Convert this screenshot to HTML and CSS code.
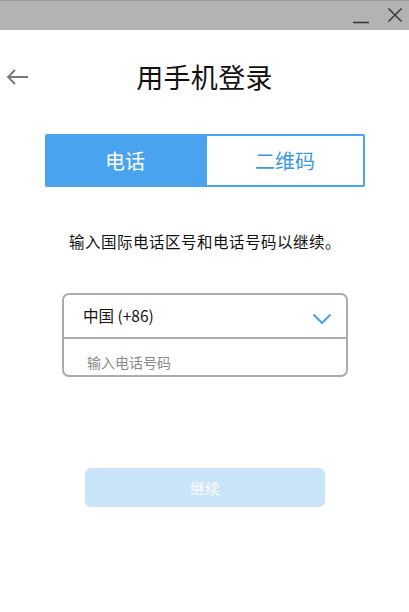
FILE: index.html
```html
<!DOCTYPE html>
<html lang="zh-CN">
<head>
<meta charset="utf-8">
<title>用手机登录</title>
<link rel="stylesheet" href="styles.css">
</head>
<body>
<div class="window">
  <div class="titlebar">
    <span class="ctrl min"><svg width="18" height="14" viewBox="0 0 18 14"><path d="M1 12.5H17" stroke="#3a3a3a" stroke-width="1.6"/></svg></span>
    <span class="ctrl close"><svg width="16" height="16" viewBox="0 0 16 16"><path d="M1.5 1.5L14.5 14.5M14.5 1.5L1.5 14.5" stroke="#3a3a3a" stroke-width="1.5"/></svg></span>
  </div>
  <div class="header">
    <span class="back"><svg width="24" height="18" viewBox="0 0 24 18"><path d="M22 9H2M9 2L2 9L9 16" fill="none" stroke="#777" stroke-width="1.8"/></svg></span>
    <h1 class="title">用手机登录</h1>
    <span></span>
  </div>
  <div class="tabs">
    <div class="tab active">电话</div>
    <div class="tab">二维码</div>
  </div>
  <p class="desc">输入国际电话区号和电话号码以继续。</p>
  <div class="field">
    <div class="row country">
      <span>中国 (+86)</span>
      <svg class="chev" width="20" height="14" viewBox="0 0 20 14"><path d="M1.5 2.5L10 11L18.5 2.5" fill="none" stroke="#4aa3e8" stroke-width="2"/></svg>
    </div>
    <div class="row phone">输入电话号码</div>
  </div>
  <div class="btnwrap"><div class="btn">继续</div></div>
</div>
</body>
</html>
```
FILE: styles.css
```css
html, body {
  margin: 0;
  padding: 0;
  background: #fff;
}
body {
  font-family: "Noto Sans CJK SC", "Noto Sans", "Liberation Sans", sans-serif;
  color: #111;
}
.window {
  width: 409px;
  height: 612px;
  overflow: hidden;
}
.titlebar {
  height: 29px;
  background: #b3b3b3;
  border-top: 1px solid #9a9a9a;
  display: flex;
  justify-content: flex-end;
  align-items: center;
}
.ctrl {
  display: flex;
  align-items: center;
  justify-content: center;
}
.min { width: 18px; margin-right: 17px; margin-top: 2px; }
.close { width: 16px; margin-right: 6px; margin-top: -1px; }
.header {
  margin-top: 19px;
  height: 56px;
  display: grid;
  grid-template-columns: 1fr auto 1fr;
  align-items: center;
}
.back {
  padding-left: 6px;
  display: flex;
  align-items: center;
}
.title {
  margin: 0;
  font-size: 27px;
  font-weight: 400;
  line-height: 36px;
  color: #111;
  letter-spacing: 0.3px;
}
.tabs {
  margin: 29px 44px 0 45px;
  height: 53px;
  display: flex;
}
.tab {
  flex: 1;
  display: flex;
  align-items: center;
  justify-content: center;
  font-size: 20px;
  color: #3d97e0;
  border: 2px solid #4aa3ee;
  border-radius: 0 2px 2px 0;
  box-sizing: border-box;
}
.tab.active {
  background: #4aa3ee;
  color: #fff;
  border-radius: 2px 0 0 2px;
}
.desc {
  margin: 43px 0 0;
  text-align: center;
  font-size: 15.5px;
  letter-spacing: 0.5px;
  line-height: 22px;
  color: #111;
  padding-left: 1px;
}
.field {
  margin: 41px 61px 0 62px;
  border: 2px solid #ababab;
  border-radius: 7px;
}
.row {
  box-sizing: border-box;
}
.country {
  height: 44px;
  border-bottom: 2px solid #ababab;
  display: flex;
  align-items: center;
  justify-content: space-between;
  padding: 0 14px 2px 19px;
  font-size: 15.5px;
  color: #111;
}
.chev { margin-top: 8px; }
.phone {
  height: 36px;
  display: flex;
  align-items: center;
  padding-left: 23px;
  font-size: 14px;
  color: #888;
  padding-top: 9px;
}
.btnwrap {
  margin-top: 91px;
  display: flex;
  justify-content: center;
  padding-left: 1px;
}
.btn {
  width: 240px;
  height: 39px;
  border-radius: 6px;
  background: #c9e3f9;
  color: #fff;
  font-size: 15px;
  display: flex;
  align-items: center;
  justify-content: center;
}
```
